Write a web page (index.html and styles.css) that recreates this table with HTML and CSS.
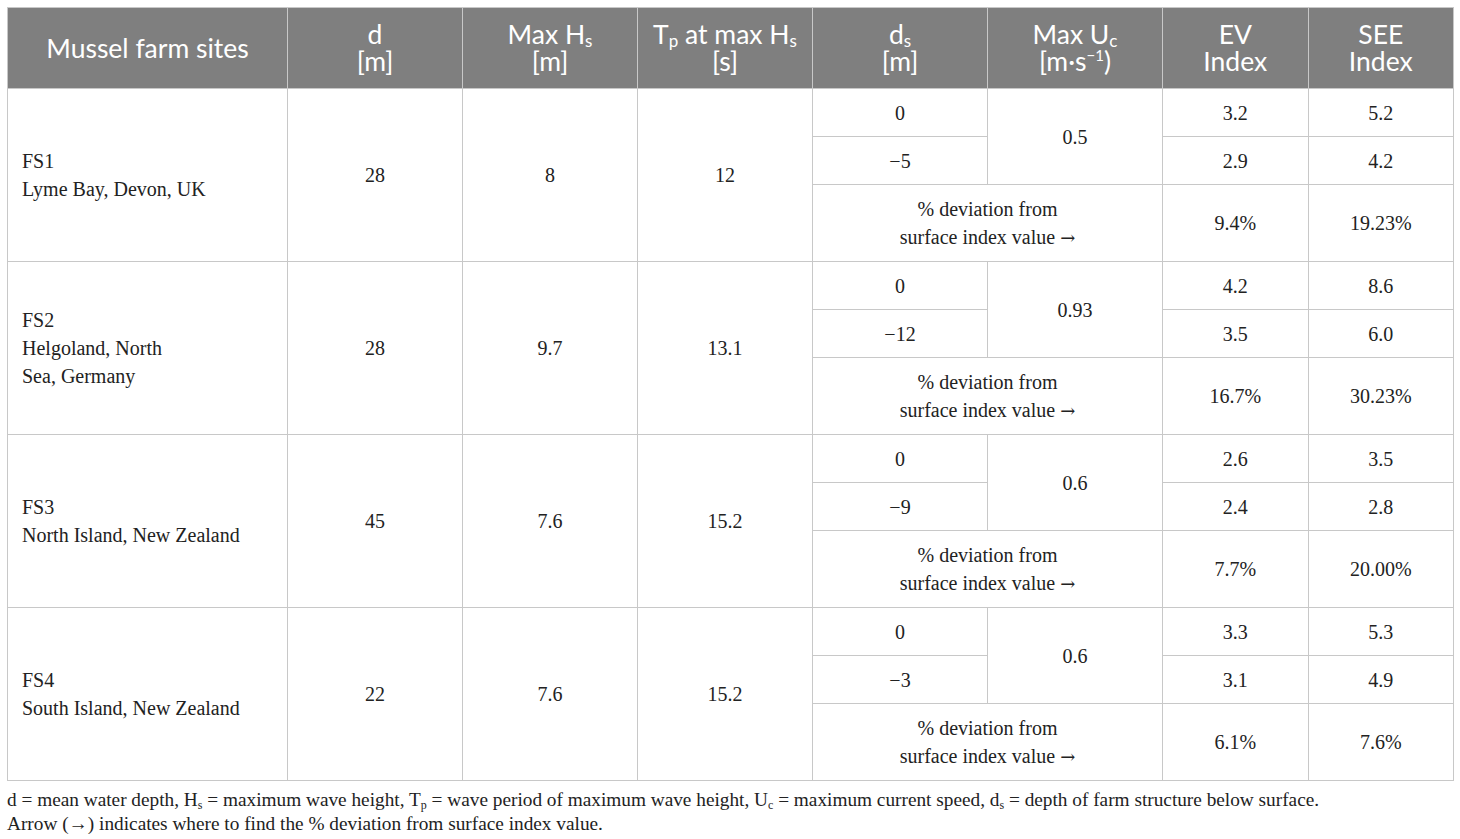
FILE: index.html
```html
<!DOCTYPE html>
<html lang="en">
<head>
    <meta charset="UTF-8">
    <title>Mussel farm sites</title>
    <link rel="stylesheet" href="styles.css">
</head>
<body>
    <table class="sites">
        <colgroup>
            <col class="c-site">
            <col class="c-mid">
            <col class="c-mid">
            <col class="c-mid">
            <col class="c-mid">
            <col class="c-mid">
            <col class="c-idx">
            <col class="c-idx">
        </colgroup>
        <thead>
            <tr>
                <th>Mussel farm sites</th>
                <th>d<br>[m]</th>
                <th>Max H<sub>s</sub><br>[m]</th>
                <th>T<sub>p</sub> at max H<sub>s</sub><br>[s]</th>
                <th>d<sub>s</sub><br>[m]</th>
                <th>Max U<sub>c</sub><br>[m·s<sup>−1</sup>)</th>
                <th>EV<br>Index</th>
                <th>SEE<br>Index</th>
            </tr>
        </thead>
        <tbody>
            <tr class="sub">
                <td rowspan="3" class="site">FS1<br>Lyme Bay, Devon, UK</td>
                <td rowspan="3">28</td>
                <td rowspan="3">8</td>
                <td rowspan="3">12</td>
                <td>0</td>
                <td rowspan="2">0.5</td>
                <td>3.2</td>
                <td>5.2</td>
            </tr>
            <tr class="sub">
                <td>−5</td>
                <td>2.9</td>
                <td>4.2</td>
            </tr>
            <tr class="dev">
                <td colspan="2">% deviation from<br>surface index value <span class="arr">→</span></td>
                <td>9.4%</td>
                <td>19.23%</td>
            </tr>

            <tr class="sub">
                <td rowspan="3" class="site">FS2<br>Helgoland, North<br>Sea, Germany</td>
                <td rowspan="3">28</td>
                <td rowspan="3">9.7</td>
                <td rowspan="3">13.1</td>
                <td>0</td>
                <td rowspan="2">0.93</td>
                <td>4.2</td>
                <td>8.6</td>
            </tr>
            <tr class="sub">
                <td>−12</td>
                <td>3.5</td>
                <td>6.0</td>
            </tr>
            <tr class="dev">
                <td colspan="2">% deviation from<br>surface index value <span class="arr">→</span></td>
                <td>16.7%</td>
                <td>30.23%</td>
            </tr>

            <tr class="sub">
                <td rowspan="3" class="site">FS3<br>North Island, New Zealand</td>
                <td rowspan="3">45</td>
                <td rowspan="3">7.6</td>
                <td rowspan="3">15.2</td>
                <td>0</td>
                <td rowspan="2">0.6</td>
                <td>2.6</td>
                <td>3.5</td>
            </tr>
            <tr class="sub">
                <td>−9</td>
                <td>2.4</td>
                <td>2.8</td>
            </tr>
            <tr class="dev">
                <td colspan="2">% deviation from<br>surface index value <span class="arr">→</span></td>
                <td>7.7%</td>
                <td>20.00%</td>
            </tr>

            <tr class="sub">
                <td rowspan="3" class="site">FS4<br>South Island, New Zealand</td>
                <td rowspan="3">22</td>
                <td rowspan="3">7.6</td>
                <td rowspan="3">15.2</td>
                <td>0</td>
                <td rowspan="2">0.6</td>
                <td>3.3</td>
                <td>5.3</td>
            </tr>
            <tr class="sub">
                <td>−3</td>
                <td>3.1</td>
                <td>4.9</td>
            </tr>
            <tr class="dev">
                <td colspan="2">% deviation from<br>surface index value <span class="arr">→</span></td>
                <td>6.1%</td>
                <td>7.6%</td>
            </tr>
        </tbody>
    </table>

    <p class="note">
        d = mean water depth, H<sub>s</sub> = maximum wave height, T<sub>p</sub> = wave period of maximum wave height, U<sub>c</sub> = maximum current speed, d<sub>s</sub> = depth of farm structure below surface.<br>
        Arrow (→) indicates where to find the % deviation from surface index value.
    </p>
</body>
</html>
```

FILE: styles.css
```css
* {
    margin: 0;
    padding: 0;
    box-sizing: border-box;
}

body {
    background: #fff;
    padding: 7px 7px 0 7px;
    font-family: "Liberation Serif", "Times New Roman", serif;
    color: #222;
}

.sites {
    width: 1445px;
    border-collapse: collapse;
    table-layout: fixed;
}

.c-site { width: 280px; }
.c-mid { width: 175px; }
.c-idx { width: 145.5px; }

.sites th,
.sites td {
    border: 1px solid #c8c8c8;
    text-align: center;
    vertical-align: middle;
}

.sites th {
    background: #7f7f7f;
    color: #fff;
    font-family: Lato, "Open Sans", sans-serif;
    font-weight: normal;
    font-size: 26.5px;
    line-height: 27px;
    height: 81px;
    padding: 0 4px;
}

.sites th sub {
    font-size: 17px;
    vertical-align: -3px;
    line-height: 0;
}

.sites th sup {
    font-size: 15px;
    vertical-align: 10px;
    line-height: 0;
}

.sites td {
    font-size: 20px;
    line-height: 28px;
    padding: 0 6px;
}

.sites tr.sub td {
    height: 48px;
}

.sites tr.dev td {
    height: 77px;
}

.sites td.site {
    text-align: left;
    padding-left: 14px;
}

.arr {
    font-family: "DejaVu Serif", serif;
    font-size: 18px;
}

.note {
    font-size: 19.3px;
    line-height: 24px;
    margin-top: 7px;
    color: #222;
}

.note sub {
    font-size: 12px;
    vertical-align: -3px;
    line-height: 0;
}
```
